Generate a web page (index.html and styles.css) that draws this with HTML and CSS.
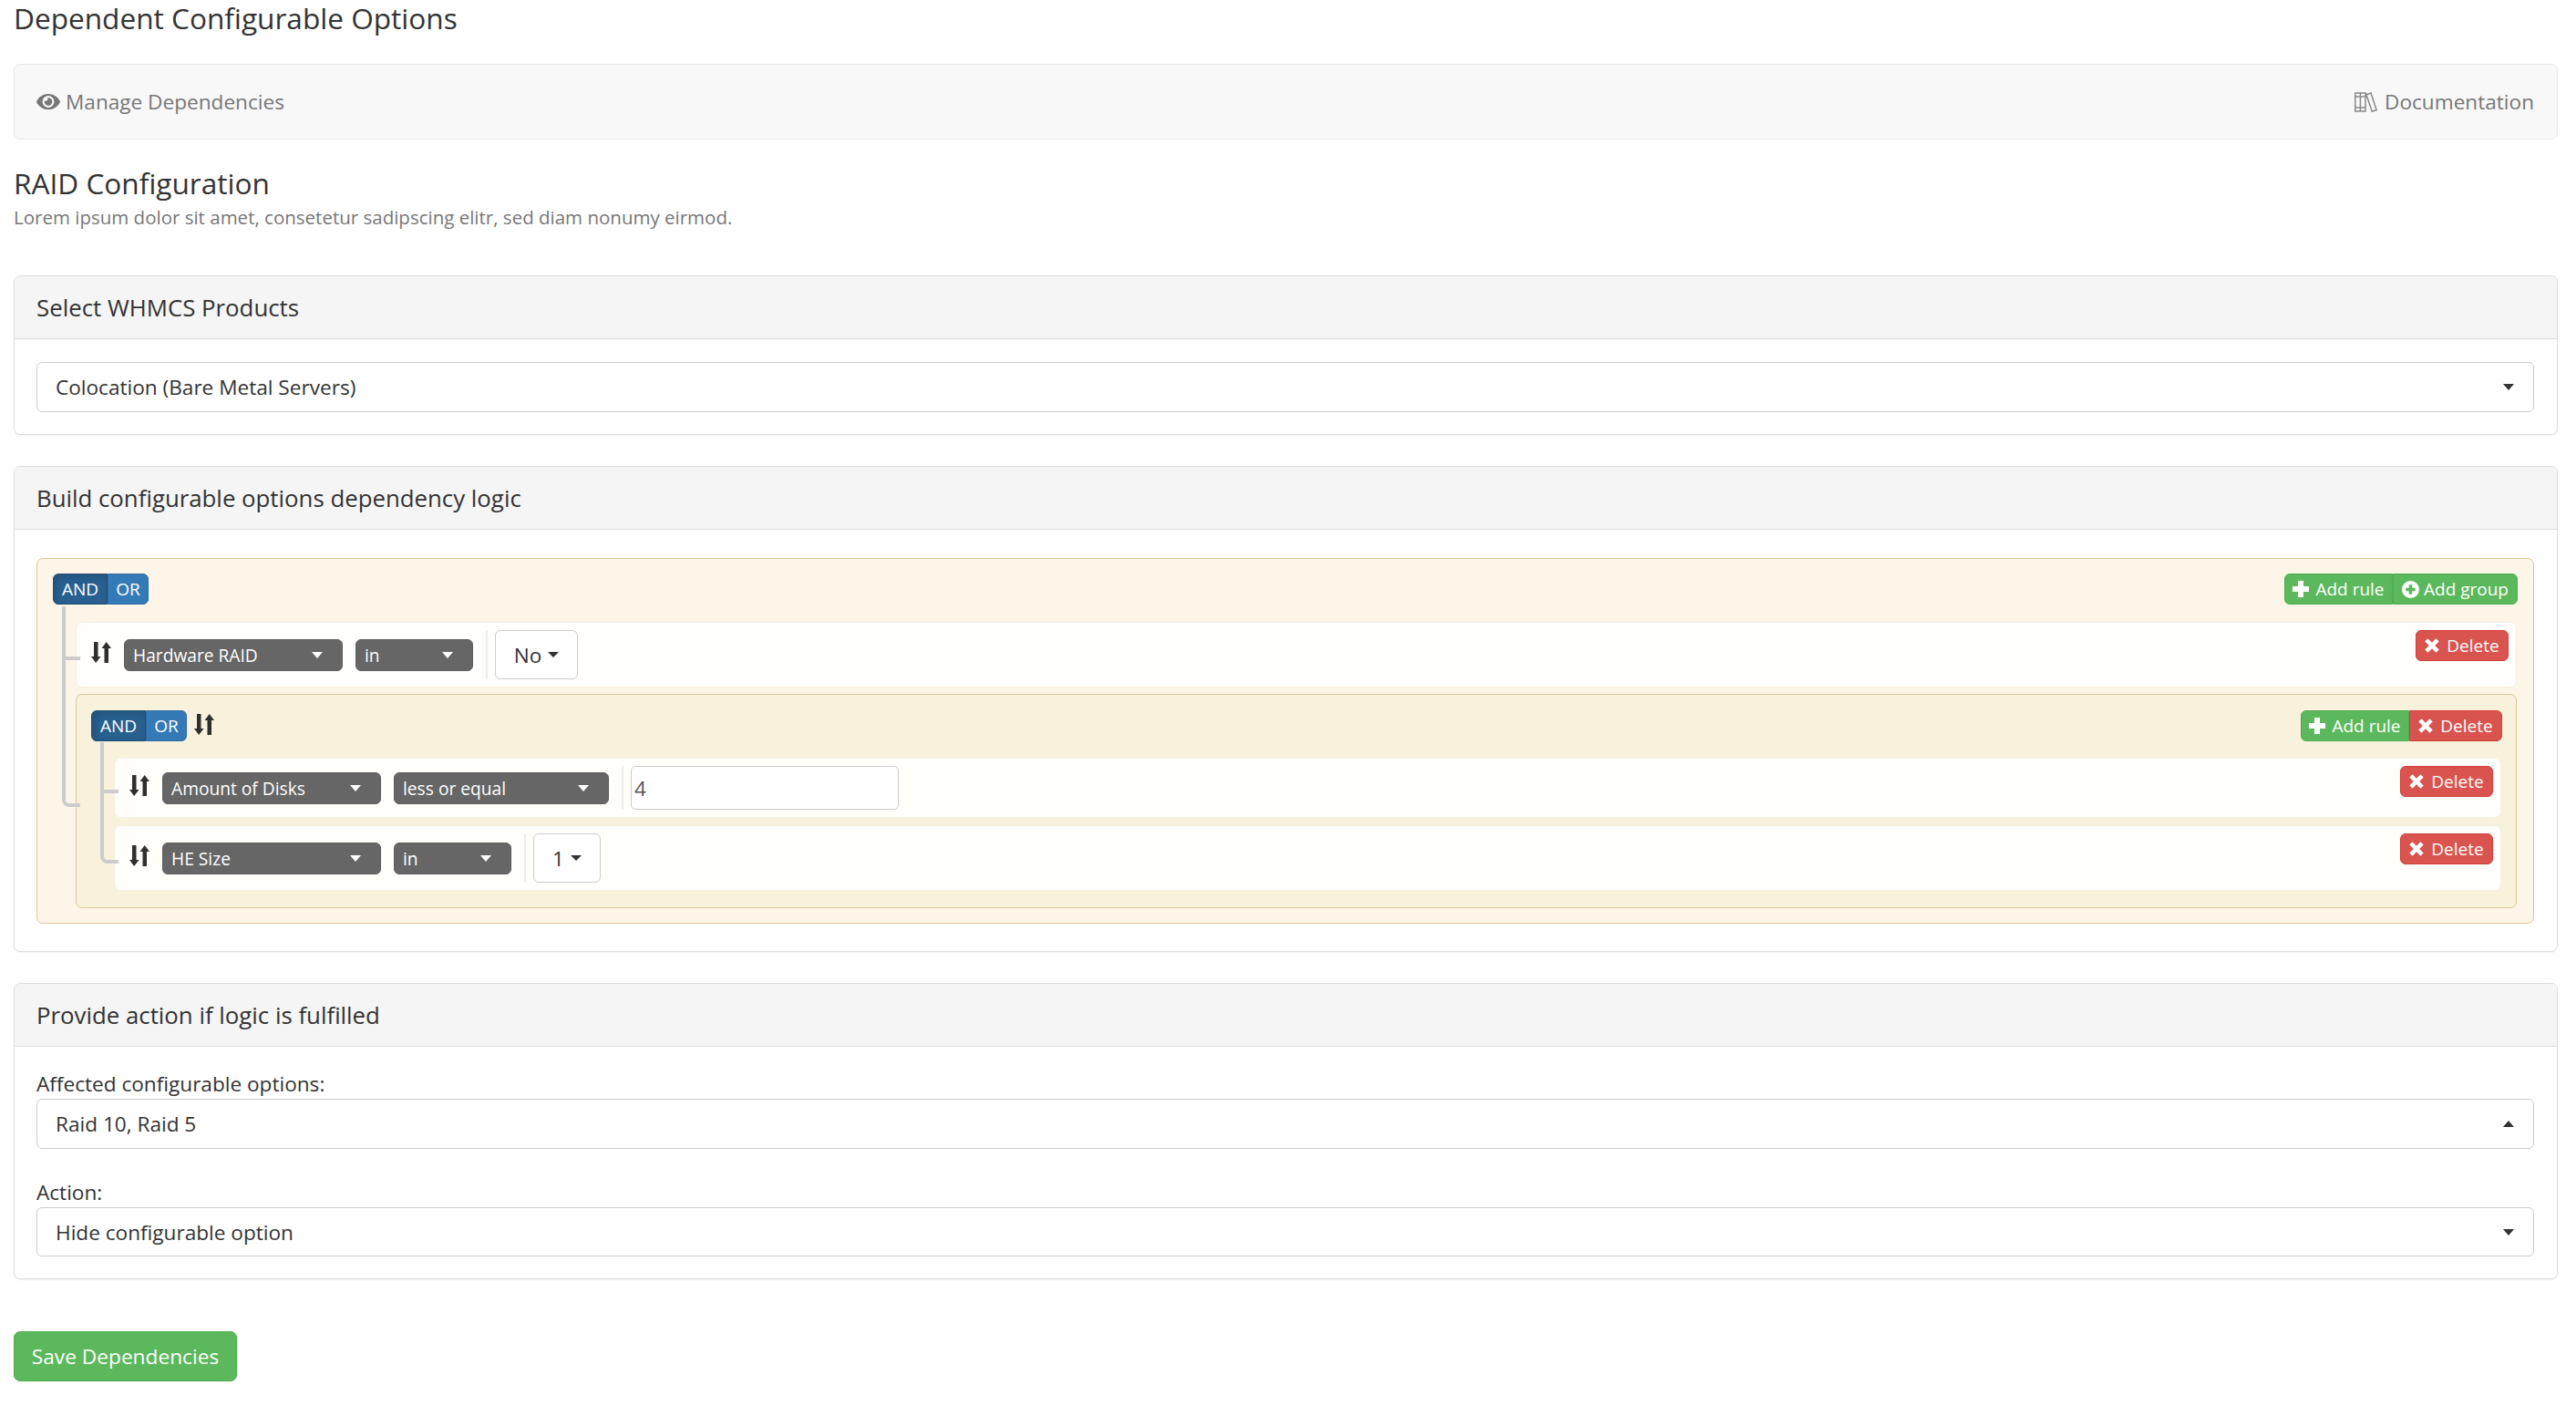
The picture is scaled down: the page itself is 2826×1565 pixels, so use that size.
FILE: index.html
```html
<!DOCTYPE html>
<html lang="en">
<head>
<meta charset="utf-8">
<title>Dependent Configurable Options</title>
<link rel="stylesheet" href="styles.css">
</head>
<body>
<svg class="defs" width="0" height="0" aria-hidden="true">
  <symbol id="i-eye" viewBox="0 0 576 512"><path d="M572.52 241.4C518.29 135.59 410.93 64 288 64S57.68 135.64 3.48 241.41a32.35 32.35 0 0 0 0 29.19C57.71 376.41 165.07 448 288 448s230.32-71.64 284.52-177.41a32.35 32.35 0 0 0 0-29.19zM288 400a144 144 0 1 1 144-144 143.93 143.93 0 0 1-144 144zm0-240a95.31 95.31 0 0 0-25.31 3.79 47.85 47.85 0 0 1-66.9 66.9A95.78 95.78 0 1 0 288 160z"/></symbol>
  <symbol id="i-books" viewBox="0 0 25 22"><path fill="none" stroke="currentColor" stroke-width="1.5" d="M.8 1h5.6v20H.8zM6.4 1h5.6v20H6.4zM.8 5h11.2M.8 17h11.2M13 2.800l5-1.800 6.200 18.800-5 1.400z"/></symbol>
  <symbol id="i-sort" viewBox="0 0 22 23"><path d="M3 0h4.500v16H10.500L5.200 23 0 16h3zM14.500 23H19V7h3L16.700 0 11.500 7h3z"/></symbol>
  <symbol id="i-plus" viewBox="0 0 18 18"><path d="M6 0h6v6h6v6h-6v6H6v-6H0V6h6z"/></symbol>
  <symbol id="i-plus-sign" viewBox="0 0 18 18"><path fill-rule="evenodd" d="M9 0a9 9 0 1 1 0 18A9 9 0 0 1 9 0zM7.300 4v3.300H4v3.400h3.300V14h3.400v-3.300H14V7.300h-3.300V4z"/></symbol>
  <symbol id="i-x" viewBox="0 0 16 16"><path d="M3.500 0.300 8 4.800 12.500.3 15.700 3.500 11.200 8l4.500 4.500-3.200 3.200L8 11.200l-4.500 4.500L.3 12.500 4.800 8 .3 3.500z"/></symbol>
</svg>

<h1 class="page-title">Dependent Configurable Options</h1>

<nav class="toolbar">
  <a class="tool-link"><svg class="ic-eye"><use href="#i-eye"/></svg>Manage Dependencies</a>
  <a class="tool-link tool-doc"><svg class="ic-books"><use href="#i-books"/></svg>Documentation</a>
</nav>

<h2 class="section-title">RAID Configuration</h2>
<p class="section-sub">Lorem ipsum dolor sit amet, consetetur sadipscing elitr, sed diam nonumy eirmod.</p>

<section class="panel">
  <header class="panel-head">Select WHMCS Products</header>
  <div class="panel-body">
    <div class="picker"><span>Colocation (Bare Metal Servers)</span><i class="tri"></i></div>
  </div>
</section>

<section class="panel">
  <header class="panel-head">Build configurable options dependency logic</header>
  <div class="panel-body body-builder">
    <div class="group">
      <div class="group-head">
        <div class="btn-group"><button class="btn btn-and">AND</button><button class="btn btn-or">OR</button></div>
        <div class="btn-group end">
          <button class="btn btn-green"><svg class="ic-plus"><use href="#i-plus"/></svg>Add rule</button><button class="btn btn-green btn-sep"><svg class="ic-plus ic-plus-sign"><use href="#i-plus-sign"/></svg>Add group</button>
        </div>
      </div>
      <div class="items">
        <div class="item rule">
          <svg class="ic-sort"><use href="#i-sort"/></svg>
          <div class="dark w240">Hardware RAID<i class="tri tri-w"></i></div>
          <div class="dark w129">in<i class="tri tri-w"></i></div>
          <span class="rule-sep"></span>
          <div class="value w91">No<i class="tri tri-s"></i></div>
          <button class="btn btn-red del"><svg class="ic-x"><use href="#i-x"/></svg>Delete</button>
        </div>
        <div class="item group nested">
          <div class="group-head head-34">
            <div class="head-left">
              <div class="btn-group"><button class="btn btn-and">AND</button><button class="btn btn-or">OR</button></div>
              <svg class="ic-sort ic-sort-head"><use href="#i-sort"/></svg>
            </div>
            <div class="btn-group end">
              <button class="btn btn-green"><svg class="ic-plus"><use href="#i-plus"/></svg>Add rule</button><button class="btn btn-red"><svg class="ic-x"><use href="#i-x"/></svg>Delete</button>
            </div>
          </div>
          <div class="items">
            <div class="item rule">
              <svg class="ic-sort"><use href="#i-sort"/></svg>
              <div class="dark w240">Amount of Disks<i class="tri tri-w"></i></div>
              <div class="dark w236">less or equal<i class="tri tri-w"></i></div>
              <span class="rule-sep"></span>
              <input class="num" type="text" value="4">
              <button class="btn btn-red del"><svg class="ic-x"><use href="#i-x"/></svg>Delete</button>
            </div>
            <div class="item rule">
              <svg class="ic-sort"><use href="#i-sort"/></svg>
              <div class="dark w240">HE Size<i class="tri tri-w"></i></div>
              <div class="dark w129">in<i class="tri tri-w"></i></div>
              <span class="rule-sep"></span>
              <div class="value w74">1<i class="tri tri-s"></i></div>
              <button class="btn btn-red del"><svg class="ic-x"><use href="#i-x"/></svg>Delete</button>
            </div>
          </div>
        </div>
      </div>
    </div>
  </div>
</section>

<section class="panel">
  <header class="panel-head">Provide action if logic is fulfilled</header>
  <div class="panel-body body-action">
    <label class="field-label">Affected configurable options:</label>
    <div class="picker"><span>Raid 10, Raid 5</span><i class="tri tri-up"></i></div>
    <label class="field-label label-gap">Action:</label>
    <div class="picker picker-short"><span>Hide configurable option</span><i class="tri"></i></div>
  </div>
</section>

<button class="save">Save Dependencies</button>
</body>
</html>
```

FILE: styles.css
```css
* { box-sizing: border-box; }
html, body { margin: 0; padding: 0; background: #fff; }
body {
  padding: 0 20px 0 15px;
  font-family: "Open Sans", sans-serif;
  font-size: 22.6px;
  color: #333;
}
.defs { position: absolute; }

.page-title { margin: 0 0 30px; font-size: 31.6px; font-weight: 400; line-height: 40px; }

.toolbar {
  display: flex; justify-content: space-between; align-items: center;
  height: 83px; padding: 0 25px 0 24px;
  background: #f8f8f8; border: 1px solid #e9e9e9; border-radius: 7px;
}
.tool-link { display: flex; align-items: center; color: #777; }
.ic-eye { width: 26px; height: 23px; margin-right: 6px; fill: #777; }
.ic-books { width: 25px; height: 22px; margin-right: 8px; color: #888; }

.section-title { margin: 28px 0 0; font-size: 31.6px; font-weight: 400; line-height: 40px; }
.section-sub { margin: 2px 0 49px; font-size: 20.5px; line-height: 30px; color: #777; }

.panel {
  margin-bottom: 34px;
  background: #fff; border: 1px solid #ddd; border-radius: 7px;
  box-shadow: 0 1px 2px rgba(0, 0, 0, .05);
}
.panel-head {
  display: flex; align-items: center;
  height: 69px; padding: 0 24px;
  font-size: 25.8px;
  background: #f5f5f5; border-bottom: 1px solid #ddd;
  border-radius: 6px 6px 0 0;
}
.panel-body { padding: 25px 25px 24px 24px; }
.body-builder { padding: 31px 25px 30px 24px; }
.body-action { padding: 29px 25px 24px 24px; }

.picker {
  display: flex; justify-content: space-between; align-items: center;
  height: 55px; padding: 0 21px 0 20px;
  background: #fff; border: 1px solid #ccc; border-radius: 6px;
}
.picker-short { height: 54px; }
.tri {
  display: block; width: 0; height: 0;
  border-left: 6.500px solid transparent; border-right: 6.500px solid transparent;
  border-top: 7px solid #333;
}
.tri-up { border-top: 0; border-bottom: 7px solid #333; }
.tri-w { border-top-color: #fff; }
.tri-s { border-left-width: 6px; border-right-width: 6px; border-top-width: 6px; margin-left: 7px; }

.field-label { display: block; margin-bottom: 4px; line-height: 24px; }
.label-gap { margin-top: 36px; }

.group {
  padding: 16px 18px 16px 17px;
  background: #fcf5e8; border: 1px solid #dcc896; border-radius: 7px;
}
.nested { padding: 17px 16px 18px 16px; background: #f8f1dc; }
.group-head { display: flex; justify-content: space-between; align-items: flex-start; height: 35px; }
.head-34 { height: 34px; }
.head-left { display: flex; align-items: flex-start; }
.items { margin-top: 18px; padding-left: 25px; }
.item { position: relative; margin-bottom: 7px; }
.nested .item { margin-bottom: 8px; }
.item:last-child, .nested .item:last-child { margin-bottom: 0; }
.item::before {
  content: ""; position: absolute; left: -16px; top: -7px;
  width: 16px; height: calc(50% + 9px);
  border-left: 4px solid #ccc; border-bottom: 4px solid #ccc;
}
.item:first-child::before { top: -18px; height: calc(50% + 20px); }
.item:last-child::before { border-bottom-left-radius: 8px; }
.item:not(:last-child)::after {
  content: ""; position: absolute; left: -16px; top: 50%; bottom: -7px;
  border-left: 4px solid #ccc;
}

.rule {
  display: flex; align-items: center;
  padding: 8px 8px 8px 16px;
  background: rgba(255, 255, 255, .88);
  border: 1px solid #f6f0e2; border-radius: 7px;
}
.ic-sort { flex: none; width: 22px; height: 23px; margin: -6px 14px 0 0; fill: #2f2f2f; }
.ic-sort-head { margin: 4px 0 0 8px; }
.dark {
  display: flex; justify-content: space-between; align-items: center; flex: none;
  height: 35px; margin-right: 14px; padding: 0 21px 0 9px;
  font-size: 19.2px; color: #fff;
  background: #666; border: 1px solid #5e5e5e; border-radius: 6px;
}
.w240 { width: 240px; }
.w236 { width: 236px; }
.w129 { width: 129px; }
.rule-sep { flex: none; align-self: stretch; width: 2px; margin-right: 8px; background: #eee; }
.value {
  display: flex; justify-content: center; align-items: center; flex: none;
  height: 54px; font-size: 22.5px;
  background: #fff; border: 1px solid #ccc; border-radius: 6px;
}
.w91 { width: 91px; }
.w74 { width: 74px; }
.num {
  flex: none; width: 294px; height: 48px; padding: 0 3px;
  font: 22.5px "Open Sans", sans-serif; color: #555;
  background: #fff; border: 1px solid #ccc; border-radius: 5px;
}

.btn-group { display: flex; }
.btn-group .btn:first-child { border-radius: 6px 0 0 6px; }
.btn-group .btn:last-child { border-radius: 0 6px 6px 0; }
.end { margin-right: -1px; }
.btn {
  display: inline-flex; align-items: center; justify-content: center;
  height: 100%; min-height: 34px; padding: 0;
  font: 19px "Open Sans", sans-serif; color: #fff; white-space: nowrap;
  border: 1px solid transparent; border-radius: 6px;
}
.btn-and {
  width: 60px; background: #286090; border-color: #204d74;
  box-shadow: inset 3px 3px 8px rgba(0, 0, 0, .14);
}
.btn-or { width: 45px; background: #337ab7; border-color: #2e6da4; }
.btn-green { width: 119px; background: #5cb85c; border-color: #4cae4c; }
.btn-sep { width: 137px; border-left-color: #4cae4c; }
.btn-red { width: 102px; background: #d9534f; border-color: #d43f3a; }
.del { flex: none; align-self: flex-start; height: 34px; margin-left: auto; }
.ic-plus { flex: none; width: 18px; height: 18px; margin-right: 7px; fill: #fff; }
.ic-plus-sign { width: 19px; height: 19px; margin-right: 5px; }
.ic-x { flex: none; width: 16px; height: 16px; margin-right: 8px; fill: #fff; }

.save {
  display: block; width: 245px; height: 55px; margin-top: 57px; padding: 0;
  font: 22.7px "Open Sans", sans-serif; color: #fff;
  background: #5cb85c; border: 1px solid #4cae4c; border-radius: 7px;
}
```
